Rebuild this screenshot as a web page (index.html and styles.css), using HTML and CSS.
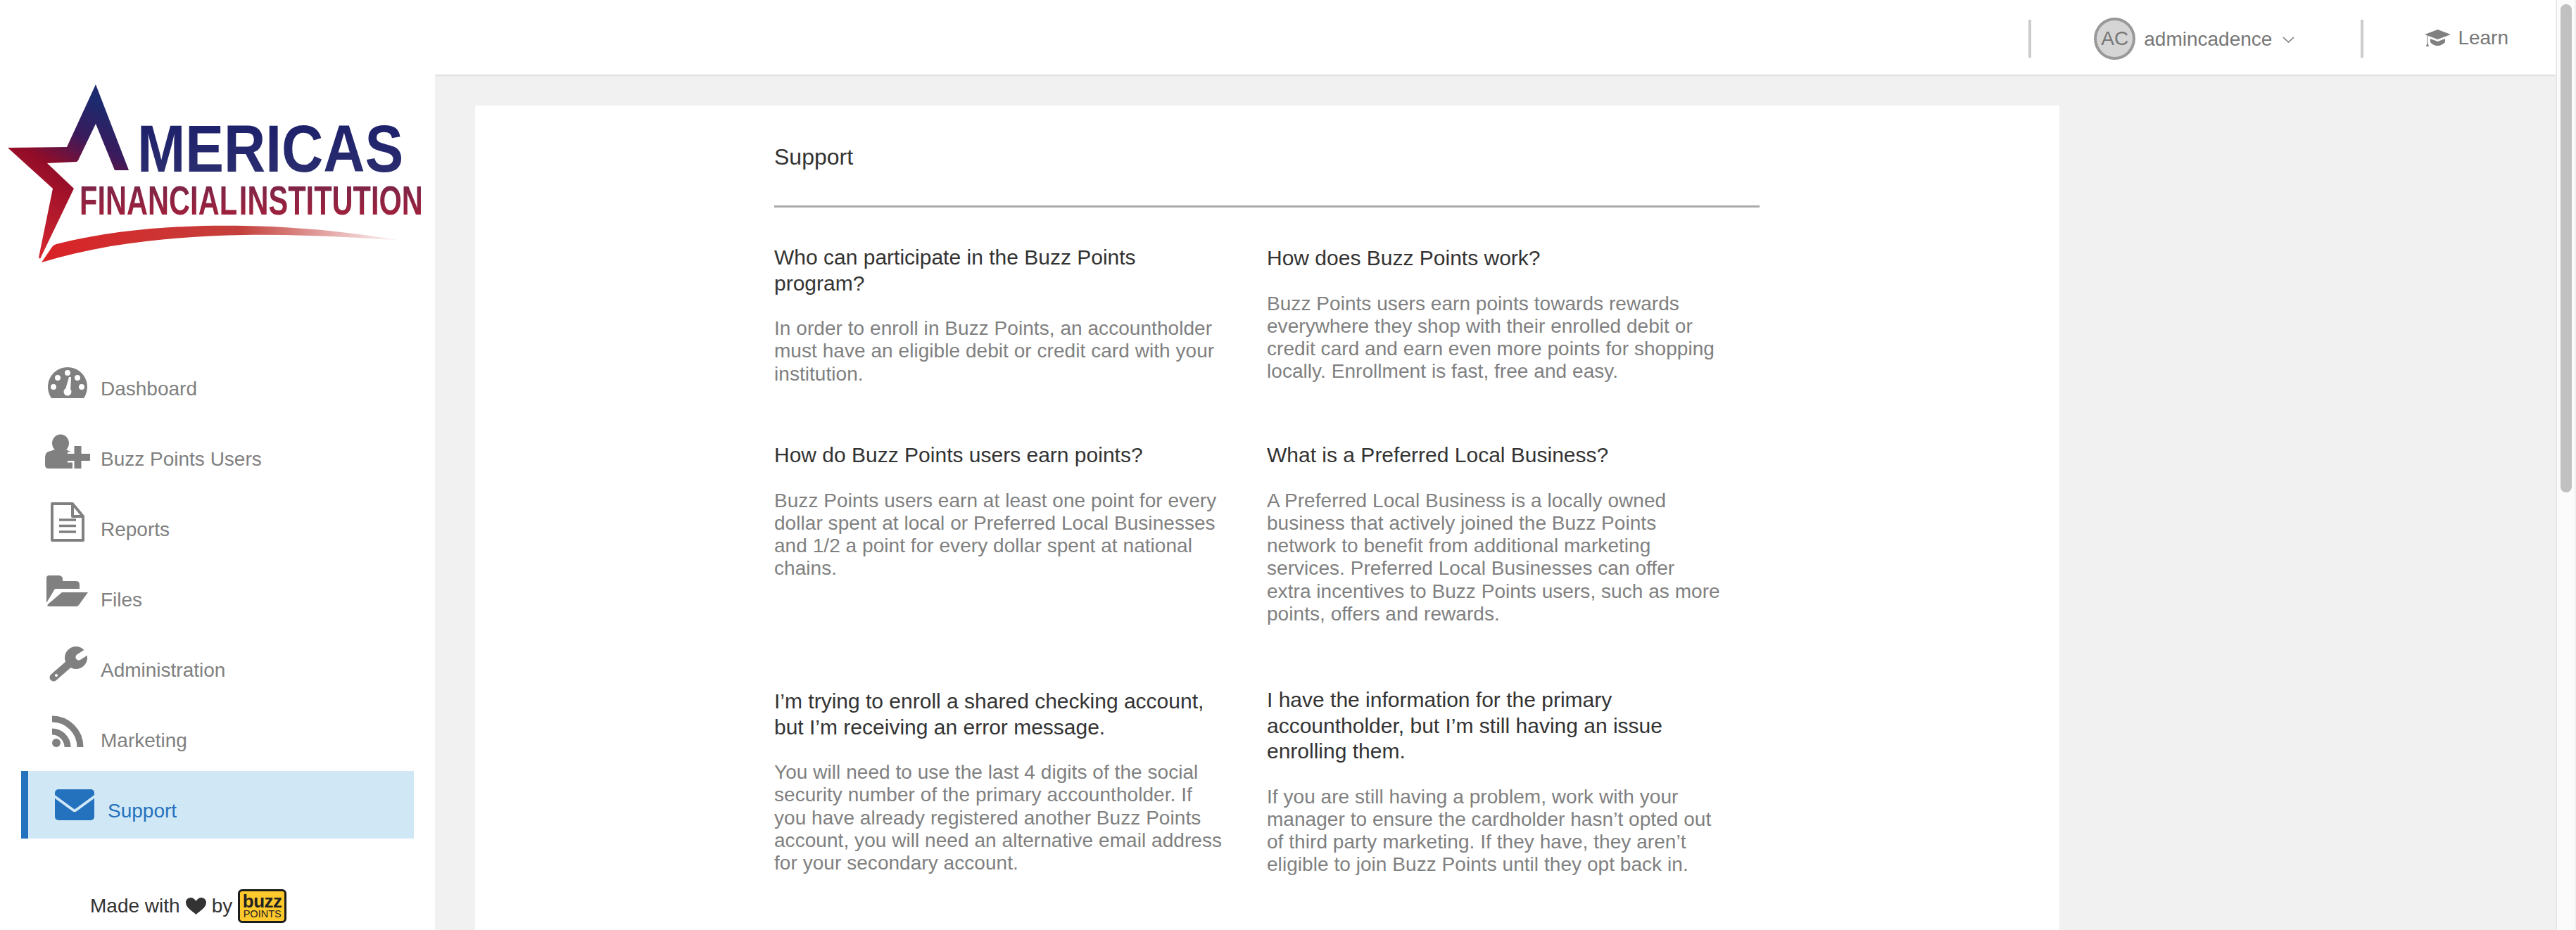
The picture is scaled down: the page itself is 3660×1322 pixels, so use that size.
FILE: index.html
```html
<!DOCTYPE html>
<html lang="en">
<head>
<meta charset="utf-8">
<title>Support</title>
<link rel="stylesheet" href="styles.css">
</head>
<body>
<div class="app">
  <aside class="sidebar">
    <svg class="logo" width="618" height="496" viewBox="0 0 618 496" role="img" aria-label="Americas Financial Institution">
      <defs>
        <linearGradient id="starGrad" gradientUnits="userSpaceOnUse" x1="172" y1="165" x2="52" y2="372">
          <stop offset="0" stop-color="#1c2a6e"/>
          <stop offset=".22" stop-color="#3a1b5c"/>
          <stop offset=".46" stop-color="#920c28"/>
          <stop offset="1" stop-color="#dc2a30"/>
        </linearGradient>
        <linearGradient id="topText" x1="0" y1="0" x2="0" y2="1">
          <stop offset="0" stop-color="#1a1e6a"/>
          <stop offset="1" stop-color="#2e3070"/>
        </linearGradient>
        <linearGradient id="subText" x1="0" y1="0" x2="0" y2="1">
          <stop offset="0" stop-color="#76264c"/>
          <stop offset="1" stop-color="#a82038"/>
        </linearGradient>
        <linearGradient id="swoosh" gradientUnits="userSpaceOnUse" x1="60" y1="0" x2="572" y2="0">
          <stop offset="0" stop-color="#d92226"/>
          <stop offset=".55" stop-color="#c4403c"/>
          <stop offset="1" stop-color="#c4403c" stop-opacity="0"/>
        </linearGradient>
      </defs>
      <path fill="url(#starGrad)" d="M136 120 L183 242 L163 242 L136 176 L111 228 L109 230 L67 232 L105 268 L57 368 L55 366 L75 268 L11 210 L95 209 Z"/>
      <path fill="url(#swoosh)" d="M59 373 L74 351 Q76 348 80 347 C180 322 280 320 347 321 C430 322 510 332 572 342 C500 337 420 333 347 334 C250 336 150 345 59 373 Z"/>
      <text class="logo-top" transform="translate(195 244) scale(1 1.16)" fill="url(#topText)">MERICAS</text>
      <text class="logo-sub" transform="translate(113 305) scale(1 1.376)" fill="url(#subText)">FINANCIAL INSTITUTION</text>
    </svg>
    <nav class="nav">
      <a class="nav-item">
        <svg class="nav-icon" viewBox="0 0 66 56"><path class="ic" d="M10 52 A28 28 0 1 1 56 52 Z"/><g class="ic-cut"><circle cx="33" cy="16" r="4"/><circle cx="19" cy="23" r="4"/><circle cx="47" cy="23" r="4"/><circle cx="13" cy="36" r="4"/><circle cx="53" cy="36" r="4"/><circle cx="33" cy="43" r="5.5"/><path d="M29.5 41 L35 22 L38 22 L37 42 Z"/></g></svg>
        <span class="nav-label">Dashboard</span>
      </a>
      <a class="nav-item">
        <svg class="nav-icon" viewBox="0 0 66 56"><ellipse class="ic" cx="23" cy="16" rx="12" ry="12.5"/><path class="ic" d="M1 47 V36 Q1 28 9 27 L15 25 Q23 31 31 25 L37 28 Q44 30 44 40 V52 H6 Q1 52 1 47 Z"/><path class="plus-halo" d="M47.500 20 V52 M33 36 H65"/><path class="plus" d="M47.500 20 V52 M33 36 H65"/></svg>
        <span class="nav-label">Buzz Points Users</span>
      </a>
      <a class="nav-item">
        <svg class="nav-icon" viewBox="0 0 66 56"><path class="ic-line" d="M11 2 H40 L55 20 V54 H11 Z M40 2 V20 H55"/><path class="ic-line ic-thin" d="M21 25 H45 M21 33.500 H45 M21 42 H45"/></svg>
        <span class="nav-label">Reports</span>
      </a>
      <a class="nav-item">
        <svg class="nav-icon" viewBox="0 0 66 56"><path class="ic" d="M3 8 Q3 4 7 4 H20 Q25 4 26 8 L26 12 H45 Q50 12 50 17 V23 H15 L3 43 Z"/><path class="ic" d="M25 28 H62 L49 46 Q48 48 45 48 H7 Q3 48 5 45 Z"/></svg>
        <span class="nav-label">Files</span>
      </a>
      <a class="nav-item">
        <svg class="nav-icon" viewBox="0 0 66 56"><path class="ic-handle" d="M44 22 L13 49"/><circle class="ic" cx="45" cy="21" r="16"/><path class="ic-notch" d="M63 11 L49 20"/><circle class="ic-cut" cx="17" cy="46" r="2"/></svg>
        <span class="nav-label">Administration</span>
      </a>
      <a class="nav-item">
        <svg class="nav-icon" viewBox="0 0 66 56"><circle class="ic" cx="17" cy="42" r="6"/><path class="ic-rss" d="M11 26 A22 22 0 0 1 33 48 M11 8 A40 40 0 0 1 51 48"/></svg>
        <span class="nav-label">Marketing</span>
      </a>
      <a class="nav-item is-active">
        <svg class="nav-icon" viewBox="0 0 66 56"><rect class="ic-active" x="5" y="8" width="56" height="44" rx="5"/><path class="ic-flap" d="M3 17 L31 37.500 Q33 39 35 37.500 L63 17"/></svg>
        <span class="nav-label">Support</span>
      </a>
    </nav>
    <footer class="made">
      <span>Made with</span>
      <svg class="heart" viewBox="0 0 29 24"><path d="M14.500 24 C9 19 0 14 0 7 C0 3 3 0 7 0 C10 0 13 2 14.500 5 C16 2 19 0 22 0 C26 0 29 3 29 7 C29 14 20 19 14.500 24 Z"/></svg>
      <span>by</span>
      <span class="buzz"><span class="buzz-top">buzz</span><span class="buzz-sub">POINTS</span></span>
    </footer>
  </aside>
  <div class="main">
    <header class="topbar">
      <span class="divider"></span>
      <span class="user">
        <span class="avatar">AC</span>
        <span class="username">admincadence</span>
        <svg class="chevron" viewBox="0 0 17 9"><path d="M1 1 L8.500 8 L16 1"/></svg>
      </span>
      <span class="divider"></span>
      <span class="learn">
        <svg class="cap" viewBox="0 0 37 24"><path d="M18.500 0 L37 7 L18.500 14 L0 7 Z"/><path d="M8 13 L18.500 17 L29 13 V18 Q24 23 18.500 23 Q12 23 8 18 Z"/><path d="M3.500 8 V19 L2 24 H6 L4.500 19 V8 Z"/></svg>
        <span>Learn</span>
      </span>
    </header>
    <main class="card">
      <h1 class="title">Support</h1>
      <div class="faq">
        <section class="cell">
          <h2 class="q">Who can participate in the Buzz Points program?</h2>
          <p class="a">In order to enroll in Buzz Points, an accountholder must have an eligible debit or credit card with your institution.</p>
        </section>
        <section class="cell cell-down">
          <h2 class="q">How does Buzz Points work?</h2>
          <p class="a">Buzz Points users earn points towards rewards everywhere they shop with their enrolled debit or credit card and earn even more points for shopping locally. Enrollment is fast, free and easy.</p>
        </section>
        <section class="cell">
          <h2 class="q">How do Buzz Points users earn points?</h2>
          <p class="a">Buzz Points users earn at least one point for every dollar spent at local or Preferred Local Businesses and 1/2 a point for every dollar spent at national chains.</p>
        </section>
        <section class="cell">
          <h2 class="q">What is a Preferred Local Business?</h2>
          <p class="a">A Preferred Local Business is a locally owned business that actively joined the Buzz Points network to benefit from additional marketing services. Preferred Local Businesses can offer extra incentives to Buzz Points users, such as more points, offers and rewards.</p>
        </section>
        <section class="cell">
          <h2 class="q">I’m trying to enroll a shared checking account, but I’m receiving an error message.</h2>
          <p class="a">You will need to use the last 4 digits of the social security number of the primary accountholder. If you have already registered another Buzz Points account, you will need an alternative email address for your secondary account.</p>
        </section>
        <section class="cell cell-up">
          <h2 class="q">I have the information for the primary accountholder, but I’m still having an issue enrolling them.</h2>
          <p class="a">If you are still having a problem, work with your manager to ensure the cardholder hasn’t opted out of third party marketing. If they have, they aren’t eligible to join Buzz Points until they opt back in.</p>
        </section>
      </div>
    </main>
  </div>
  <div class="rail"><div class="thumb"></div></div>
</div>
</body>
</html>
```

FILE: styles.css
```css
* { box-sizing: border-box; }
body { margin: 0; font-family: "Liberation Sans", Arial, sans-serif; color: #333; }
.app { display: flex; height: 100vh; overflow: hidden; background: #f1f1f1; }

.sidebar { flex: 0 0 618px; background: #fff; }
.logo { display: block; }
.logo-top { font: 700 82px "Liberation Sans", Arial, sans-serif; }
.logo-sub { font: 700 41.600px "Liberation Sans", Arial, sans-serif; word-spacing: -8px; }

.nav { display: flex; flex-direction: column; gap: 4px; margin: 0 30px; }
.nav-item { display: flex; align-items: flex-start; height: 96px; padding: 18px 0 0 33px; color: #808080; }
.nav-icon { flex: none; width: 66px; height: 56px; margin-right: 14px; }
.nav-label { margin-top: 23px; font-size: 28px; line-height: 32px; }
.is-active { background: #d0e8f6; border-left: 10px solid #2471bd; color: #2471bd; }

.ic { fill: #808080; }
.ic-cut { fill: #fff; }
.ic-active { fill: #2471bd; }
.ic-flap { fill: none; stroke: #d0e8f6; stroke-width: 4; }
.ic-line { fill: none; stroke: #808080; stroke-width: 4; stroke-linejoin: round; }
.ic-thin { stroke-width: 3.500; }
.ic-handle { fill: none; stroke: #808080; stroke-width: 11; stroke-linecap: round; }
.ic-notch { fill: none; stroke: #fff; stroke-width: 9; stroke-linecap: round; }
.ic-rss { fill: none; stroke: #808080; stroke-width: 9; }
.plus { fill: none; stroke: #808080; stroke-width: 10; }
.plus-halo { fill: none; stroke: #fff; stroke-width: 15; }

.made { display: flex; align-items: center; height: 48px; margin: 72px 0 0 128px; font-size: 28px; line-height: 32px; color: #333; }
.heart { width: 29px; height: 24px; margin: 0 8px; fill: #333; }
.buzz { display: flex; flex-direction: column; align-items: center; justify-content: center; width: 69px; height: 48px; margin-left: 8px; background: #fdc92c; border: 3px solid #1c1c1c; border-radius: 6px; color: #222; }
.buzz-top { font-size: 26px; font-weight: 700; line-height: 22px; letter-spacing: -.5px; }
.buzz-sub { font-size: 14.500px; line-height: 14px; }

.main { flex: 1 1 0; min-width: 0; height: 100vh; overflow: hidden; }
.topbar { display: flex; align-items: center; justify-content: flex-end; height: 106px; padding: 4px 67px 0 0; background: #fff; box-shadow: 0 1px 3px rgba(0, 0, 0, .14); font-size: 28px; color: #777; }
.divider { width: 4px; height: 54px; background: #ccc; }
.user { display: flex; align-items: center; margin: 2px 94px 0 89px; }
.avatar { display: flex; align-items: center; justify-content: center; width: 59px; height: 60px; margin-top: -2px; border: 4px solid #999; border-radius: 50%; background: #d5d5d5; }
.username { margin-left: 12px; }
.chevron { width: 17px; height: 9px; margin-left: 15px; fill: none; stroke: #777; stroke-width: 1.500; }
.learn { display: flex; align-items: center; margin: -2px 0 0 87px; }
.cap { width: 37px; height: 24px; margin-right: 10px; fill: #808080; }

.card { width: 2251px; height: 2345px; margin: 44px 0 0 57px; padding: 53px 0 0 425px; background: #fff; }
.title { width: 1400px; margin: 0; padding-bottom: 49px; border-bottom: 3px solid #aaa; font-size: 32px; font-weight: 400; line-height: 40px; color: #333; }
.faq { display: grid; grid-template-columns: 700px 700px; grid-template-rows: 281px 350px auto; margin-top: 53px; }
.cell { max-width: 646px; }
.cell-down { margin-top: 1px; }
.cell-up { margin-top: -2px; }
.q { max-width: 640px; margin: 0 0 30px; font-size: 30px; font-weight: 400; line-height: 36.500px; color: #333; }
.a { margin: 0; font-size: 28px; letter-spacing: .05px; line-height: 32.300px; color: #808080; }

.rail { flex: 0 0 29px; padding: 6px 0 0 5px; background: #fbfbfb; border-left: 2px solid #e8e8e8; border-right: 2px solid #f0f0f0; }
.thumb { width: 16px; height: 694px; background: #c1c1c1; border-radius: 8px; }
```
